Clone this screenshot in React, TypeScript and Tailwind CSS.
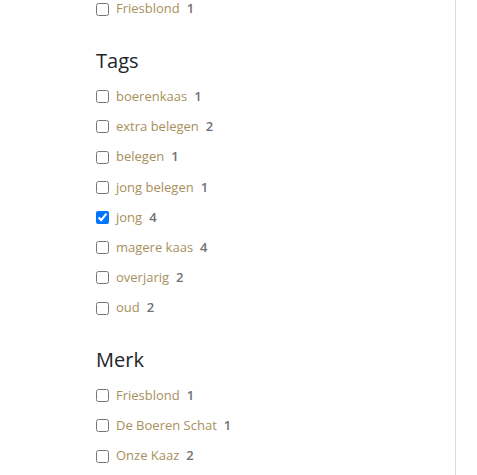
import React from 'react';

type Option = { label: string; count: number; checked?: boolean };

const tags: Option[] = [
  { label: 'boerenkaas', count: 1 },
  { label: 'extra belegen', count: 2 },
  { label: 'belegen', count: 1 },
  { label: 'jong belegen', count: 1 },
  { label: 'jong', count: 4, checked: true },
  { label: 'magere kaas', count: 4 },
  { label: 'overjarig', count: 2 },
  { label: 'oud', count: 2 },
];

const brands: Option[] = [
  { label: 'Friesblond', count: 1 },
  { label: 'De Boeren Schat', count: 1 },
  { label: 'Onze Kaaz', count: 2 },
];

function FacetRow({ option }: { option: Option }) {
  const [checked, setChecked] = React.useState(!!option.checked);
  return (
    <label className="flex h-[30.2px] items-center text-[13px]">
      <input
        type="checkbox"
        checked={checked}
        onChange={() => setChecked(!checked)}
        className="m-0 h-[13px] w-[13px] accent-[#0075ff]"
      />
      <span className="ml-[7px] text-[#a88f5c]">{option.label}</span>
      <span className="ml-[7px] font-semibold text-[#6e7175]">{option.count}</span>
    </label>
  );
}

function Facet({ title, options }: { title: string; options: Option[] }) {
  return (
    <div className="mt-[24.5px]">
      <h3 className="mb-[9px] text-[20px] leading-6 text-[#212529]">{title}</h3>
      {options.map((o) => (
        <FacetRow key={o.label} option={o} />
      ))}
    </div>
  );
}

export default function App() {
  return (
    <div
      className="flex h-[475px] overflow-hidden bg-white"
      style={{ fontFamily: '"Open Sans", "Noto Sans", sans-serif' }}
    >
      <aside className="-mt-[6px] w-[455px] pl-[96px]">
        <FacetRow option={{ label: 'Friesblond', count: 1 }} />
        <Facet title="Tags" options={tags} />
        <Facet title="Merk" options={brands} />
      </aside>
      <div className="w-px bg-[#dcdcdc]" />
      <div className="flex-1" />
    </div>
  );
}
